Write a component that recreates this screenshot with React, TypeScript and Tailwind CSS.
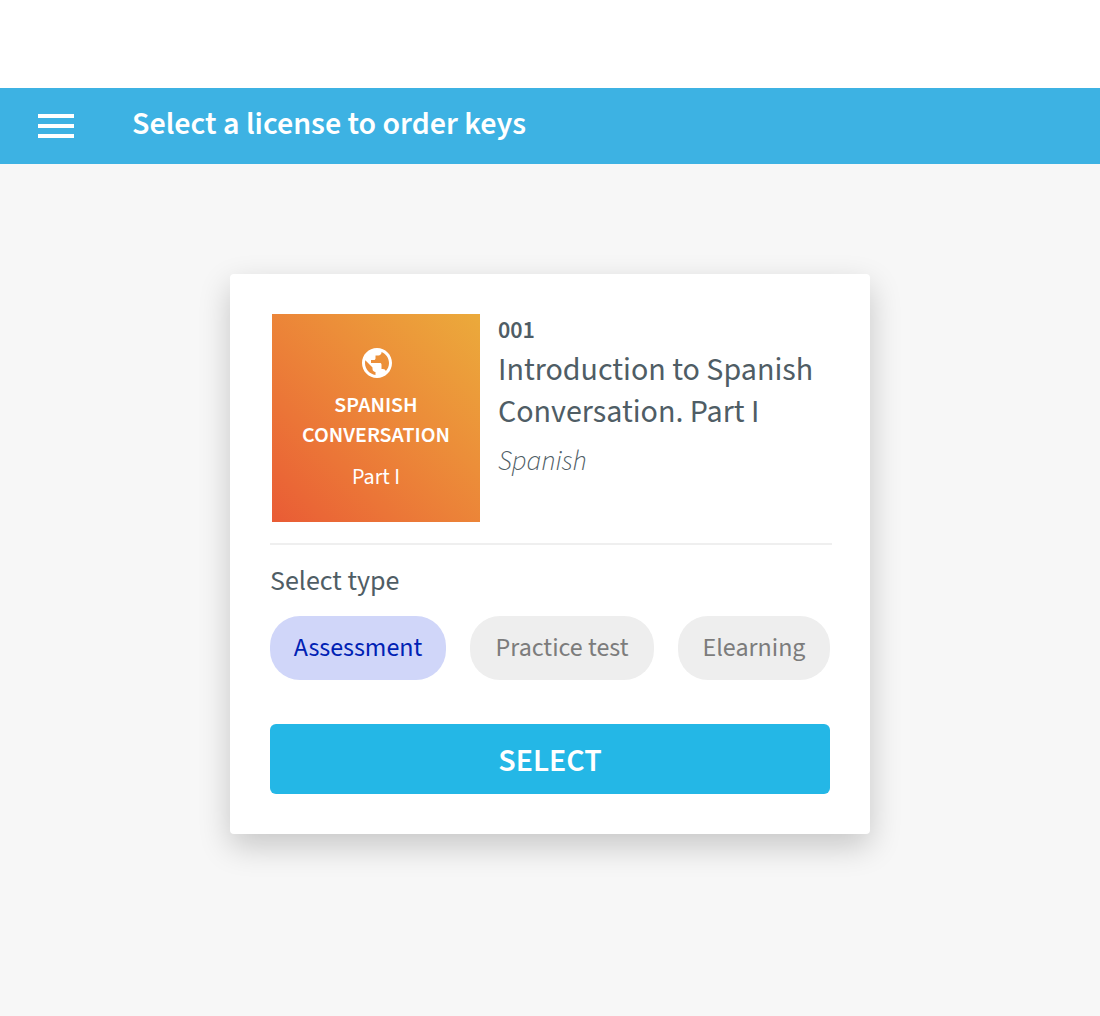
import { useState } from "react";
import { MdPublic } from "react-icons/md";

const types = ["Assessment", "Practice test", "Elearning"];

export default function App() {
  const [type, setType] = useState("Assessment");
  return (
    <div className="flex min-h-screen flex-col bg-[#f7f7f7] font-['Source_Sans_3','Source_Sans_Pro','Noto_Sans_CJK_SC',sans-serif] text-[#4f5d65]">
      <div className="h-[88px] bg-white" />
      <header className="flex h-[76px] items-center bg-[#3db2e3] px-[38px] text-white">
        <button type="button" aria-label="Open menu" className="flex w-9 shrink-0 flex-col gap-[6px]">
          <span className="h-1 w-full bg-white" />
          <span className="h-1 w-full bg-white" />
          <span className="h-1 w-full bg-white" />
        </button>
        <h1 className="ml-[58px] pb-1 text-[32px] leading-10 font-semibold">Select a license to order keys</h1>
      </header>
      <main className="flex justify-center px-4 py-[110px]">
        <section className="w-full max-w-[640px] rounded-[4px] bg-white p-10 shadow-[0_12px_32px_rgba(0,0,0,0.2)]">
          <div className="-mr-[2px] flex gap-[18px] border-b-2 border-[#efefef] pb-[21px] pl-[2px]">
            <div className="flex size-[208px] shrink-0 flex-col items-center bg-linear-to-tr from-[#e95b35] to-[#ebaa3b] pt-[31px] text-center text-[22px] leading-[30px] text-white">
              <MdPublic className="ml-[2px] size-9" />
              <p className="mt-[9px] font-semibold">SPANISH<br />CONVERSATION</p>
              <p className="mt-3">Part I</p>
            </div>
            <div className="min-w-0">
              <p className="text-2xl leading-[34px] font-semibold">001</p>
              <h2 className="mt-px text-[32px] leading-[42px]">Introduction to Spanish Conversation. Part I</h2>
              <p className="mt-2 text-[28px] leading-10 font-light italic">Spanish</p>
            </div>
          </div>
          <h3 className="mt-4 text-[28px] leading-10">Select type</h3>
          <div className="mt-[15px] grid grid-cols-[176fr_184fr_152fr] gap-6">
            {types.map((t) => (
              <button
                key={t}
                type="button"
                aria-pressed={t === type}
                onClick={() => setType(t)}
                className={`h-16 rounded-[30px] text-[26px] leading-10 whitespace-nowrap ${t === type ? "bg-[#d0d6f9] text-[#0022b4]" : "bg-[#eeeeee] text-[#7c7c7c]"}`}
              >
                {t}
              </button>
            ))}
          </div>
          <button type="button" className="mt-11 h-[70px] w-full rounded-md bg-[#24b7e6] pt-1 text-[32px] leading-10 font-semibold text-white">
            SELECT
          </button>
        </section>
      </main>
    </div>
  );
}
